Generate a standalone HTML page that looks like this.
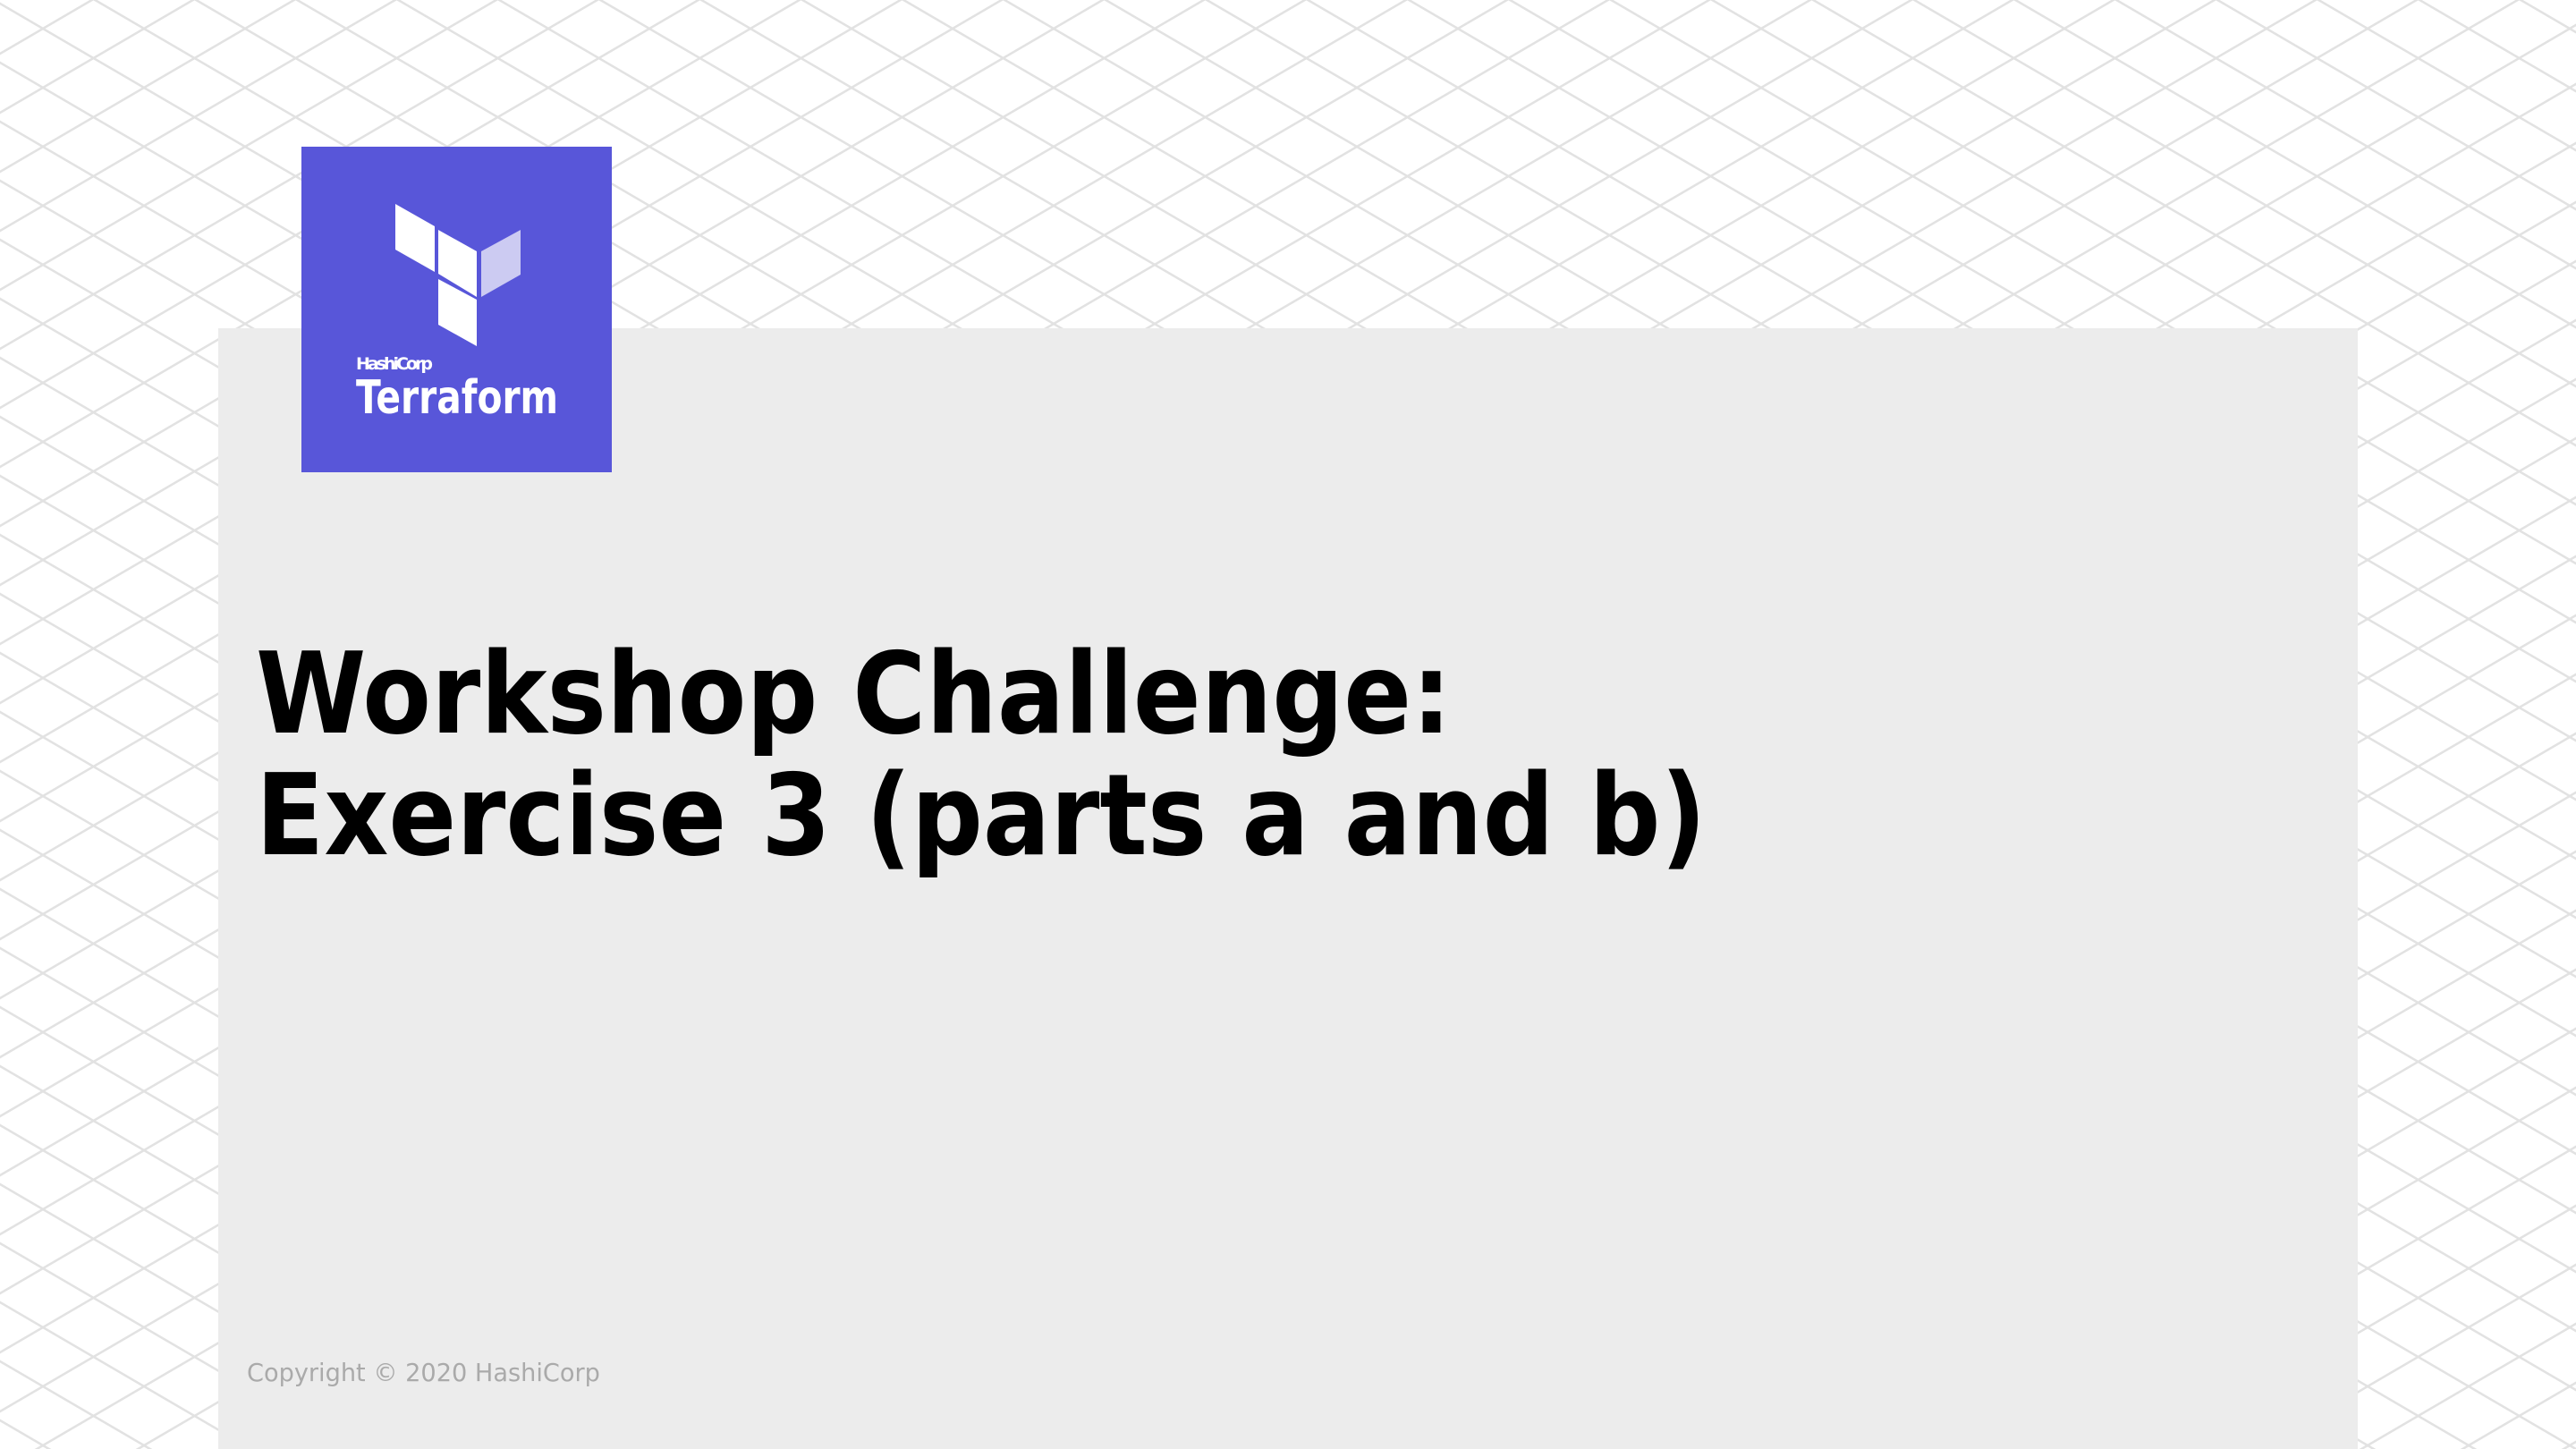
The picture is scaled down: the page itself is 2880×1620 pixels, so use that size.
<!DOCTYPE html>
<html><head><style>
html,body{margin:0;padding:0}
body{width:2880px;height:1620px;position:relative;overflow:hidden;background:#fff}
.bg{position:absolute;left:0;top:0}
.panel{position:absolute;left:244px;top:367px;width:2392px;height:1253px;background:#ececec}
.logo{position:absolute;left:337px;top:164px;width:347px;height:364px;background:#5856d9}
.t{position:absolute;left:286px;font-family:"DejaVu Sans",sans-serif;font-weight:bold;font-size:126px;color:#000;white-space:nowrap;line-height:1;transform-origin:0 0}
.c{position:absolute;left:276px;top:1521px;font-family:"DejaVu Sans",sans-serif;font-size:28px;color:#aaa;white-space:nowrap;line-height:1;transform:scaleX(0.97);transform-origin:0 0}
</style></head><body>
<svg class="bg" width="2880" height="1620">
<defs><pattern id="p" x="-65" y="-34" width="113" height="66" patternUnits="userSpaceOnUse">
<path d="M0 0L113 66M113 0L0 66" stroke="#e2e2e2" stroke-width="2.5" fill="none"/>
</pattern></defs>
<rect width="2880" height="1620" fill="url(#p)"/>
</svg>
<div class="panel"></div>
<div class="logo"></div>
<svg class="bg" width="2880" height="1620">
<polygon points="442,228 486,253 486,304 442,279" fill="#fff"/>
<polygon points="490,257 533,281 533,332 490,306" fill="#fff"/>
<polygon points="538,281 582,257 582,307 538,332" fill="#cccbf2"/>
<polygon points="490,312 533,335 533,387 490,363" fill="#fff"/>
<text x="398" y="413" font-family="DejaVu Sans,sans-serif" font-weight="bold" font-size="19" fill="#fff" textLength="86">HashiCorp</text>
<text x="398" y="462" font-family="DejaVu Sans,sans-serif" font-weight="bold" font-size="52" fill="#fff" textLength="226" lengthAdjust="spacingAndGlyphs">Terraform</text>
</svg>
<div class="t" style="top:713px;transform:scaleX(0.887)">Workshop Challenge:</div>
<div class="t" style="top:849px;transform:scaleX(0.887)">Exercise 3 (parts a and b)</div>
<div class="c">Copyright © 2020 HashiCorp</div>
</body></html>
